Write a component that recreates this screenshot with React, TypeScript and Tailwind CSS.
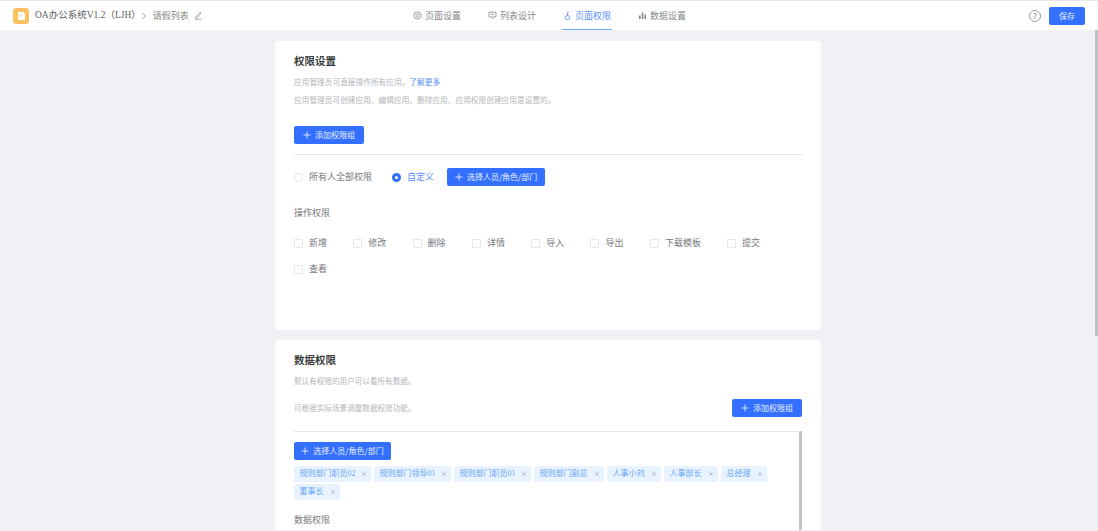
import React from "react";

const Plus = () => (
  <svg width="8" height="8" viewBox="0 0 8 8" className="shrink-0" fill="none" stroke="currentColor" strokeWidth="0.9">
    <path d="M4 .5v7M.5 4h7" />
  </svg>
);

const Btn = ({ label, w }: { label: string; w: string }) => (
  <button className={`flex ${w} h-[18px] items-center justify-center gap-[4px] rounded-[2px] bg-[#3370ff] text-[8px] text-[#e6eeff]`}>
    <Plus />
    <span>{label}</span>
  </button>
);

const Check = ({ label, w }: { label: string; w: string }) => (
  <div className={`flex ${w} items-center gap-[6px]`}>
    <span className="h-[9px] w-[9px] rounded-[1px] border border-[#e4e6ea] bg-white" />
    <span className="text-[9px] leading-[14px] text-[#77797d]">{label}</span>
  </div>
);

const Tag = ({ label, gap = "gap-[7px]" }: { label: string; gap?: string }) => (
  <span className={`flex h-[16px] items-center ${gap} rounded-[2px] bg-[#e9f3ff] px-[5.5px] font-['Liberation_Serif','Noto_Sans_CJK_SC',serif] text-[8px] text-[#66a6f5]`}>
    <span>{label}</span>
    <svg width="4" height="4" viewBox="0 0 4 4" fill="none" stroke="#8a9bb0" strokeWidth="0.6" className="shrink-0">
      <path d="M.4.4l3.2 3.2M3.6.4.4 3.6" />
    </svg>
  </span>
);

const Tab = ({ icon, label, active }: { icon: React.ReactNode; label: string; active?: boolean }) => (
  <div className={`relative flex h-full items-center gap-[3px] px-[1px] text-[9px] ${active ? "text-[#5b8ff9]" : "text-[#85878a]"}`}>
    {icon}
    <span>{label}</span>
    {active && <span className="absolute bottom-0 left-0 right-0 h-[1px] bg-[#6aa9f8]" />}
  </div>
);

export default function App() {
  return (
    <div className="flex h-[531px] w-[1098px] flex-col overflow-hidden bg-[#f0f1f5] font-['Noto_Sans_CJK_SC',sans-serif]">
      <header className="relative flex h-[30px] shrink-0 items-center border-t border-[#e8e8ea] bg-white pl-[13px] pr-[13px]">
        <div className="flex items-center">
          <span className="flex h-[16px] w-[16px] items-center justify-center rounded-[3px] bg-[#fbc061]">
            <svg width="9" height="10" viewBox="0 0 9 10">
              <path d="M1 1h5l2 2v6H1z" fill="#fff" />
              <path d="M2.5 4h3M2.5 6h2" stroke="#fbc061" strokeWidth="0.8" />
            </svg>
          </span>
          <span className="ml-[6px] font-['Liberation_Serif','Noto_Sans_CJK_SC',serif] text-[9.5px] text-[#5c5e62]">OA办公系统V1.2（LJH）</span>
          <svg className="ml-0" width="6" height="8" viewBox="0 0 6 8" fill="none" stroke="#8b8d91" strokeWidth="0.8">
            <path d="M1 .8 4.5 4 1 7.2" />
          </svg>
          <span className="ml-[6px] text-[9px] text-[#85878a]">请假列表</span>
          <svg className="ml-[5px]" width="9" height="9" viewBox="0 0 9 9" fill="none" stroke="#8b8d91" strokeWidth="0.7">
            <path d="M2 6.2 6 1.2l1 .9-4 5-1.3.3zM1.5 8.3h6" />
          </svg>
        </div>
        <nav className="absolute left-[412px] top-0 flex h-full gap-[25px]">
          <Tab label="页面设置" icon={<svg width="9" height="9" viewBox="0 0 9 9" fill="none" stroke="#85878a" strokeWidth="0.8"><circle cx="4.5" cy="4.5" r="3.6" /><circle cx="4.5" cy="4.5" r="1.5" /></svg>} />
          <Tab label="列表设计" icon={<svg width="9" height="9" viewBox="0 0 9 9" fill="none" stroke="#85878a" strokeWidth="0.8"><path d="M1 1.2h7v4.6H5.4L4.5 7.4 3.6 5.8H1zM3 3.4h3" /></svg>} />
          <Tab active label="页面权限" icon={<svg width="9" height="10" viewBox="0 0 9 10" fill="none" stroke="#5b8ff9" strokeWidth="0.8"><circle cx="4.5" cy="6.6" r="2.2" /><path d="M4.5 4.4V1.2h1.2" /></svg>} />
          <Tab label="数据设置" icon={<svg width="9" height="9" viewBox="0 0 9 9" fill="#85878a"><path d="M1 4.5h1.6V8H1zM3.7 1.5h1.6V8H3.7zM6.4 3.5H8V8H6.4z" /></svg>} />
        </nav>
        <div className="ml-auto flex items-center gap-[8px]">
          <span className="flex h-[12px] w-[12px] items-center justify-center rounded-full border border-[#9a9ca0] text-[8px] leading-none text-[#77797d]">?</span>
          <button className="h-[18px] w-[36px] rounded-[2px] bg-[#3370ff] text-[8px] text-[#e6eeff]">保存</button>
        </div>
      </header>

      <div className="flex min-h-0 flex-1">
        <main className="flex flex-1 justify-center pl-[1px]">
          <div className="flex w-[546px] flex-col gap-[10px] pt-[11px]">
            <section className="h-[289px] shrink-0 rounded-[3px] bg-white px-[19px] pt-[12px]">
              <h2 className="text-[10.5px] font-bold leading-[16px] text-[#3b3d40]">权限设置</h2>
              <p className="mt-[7px] text-[7.7px] leading-[12px] text-[#b4b6ba]">
                应用管理员可直接操作所有应用。<span className="text-[#5b8ff9]">了解更多</span>
              </p>
              <p className="mt-[6px] text-[7.7px] leading-[12px] text-[#b4b6ba]">应用管理员可创建应用、编辑应用、删除应用、应用权限创建应用是设置的。</p>
              <div className="mt-[20px]">
                <Btn label="添加权限组" w="w-[70px]" />
              </div>
              <div className="mt-[10px] w-[509px] border-t border-[#e6e7ea]" />
              <div className="mt-[13px] flex items-center">
                <span className="h-[9px] w-[9px] rounded-full border border-[#e4e6ea]" />
                <span className="ml-[6px] text-[9px] text-[#77797d]">所有人全部权限</span>
                <span className="ml-[20px] flex h-[9px] w-[9px] items-center justify-center rounded-full bg-[#3370ff]">
                  <span className="h-[3px] w-[3px] rounded-full bg-white" />
                </span>
                <span className="ml-[6px] text-[9px] text-[#5b8ff9]">自定义</span>
                <div className="ml-[13px]">
                  <Btn label="选择人员/角色/部门" w="w-[98px]" />
                </div>
              </div>
              <h3 className="mt-[20px] text-[9px] leading-[14px] text-[#77797d]">操作权限</h3>
              <div className="mt-[16px] flex flex-wrap gap-y-[12px]">
                <Check label="新增" w="w-[59.3px]" />
                <Check label="修改" w="w-[59.3px]" />
                <Check label="删除" w="w-[59.3px]" />
                <Check label="详情" w="w-[59.3px]" />
                <Check label="导入" w="w-[59.3px]" />
                <Check label="导出" w="w-[59.5px]" />
                <Check label="下载模板" w="w-[77px]" />
                <Check label="提交" w="w-[59px]" />
                <Check label="查看" w="w-[59px]" />
              </div>
            </section>

            <section className="h-[190px] shrink-0 overflow-hidden rounded-t-[3px] bg-white px-[19px] pt-[12px]">
              <h2 className="text-[10.5px] font-bold leading-[16px] text-[#3b3d40]">数据权限</h2>
              <p className="mt-[7px] text-[7.6px] leading-[12px] text-[#b4b6ba]">默认有权限的用户可以看所有数据。</p>
              <div className="mt-[12px] flex items-center justify-between">
                <p className="text-[7.6px] leading-[12px] text-[#b4b6ba]">可根据实际场景调整数据权限功能。</p>
                <Btn label="添加权限组" w="w-[70px]" />
              </div>
              <div className="mt-[14px] h-[120px] w-[508px] border-r-[3px] border-t border-r-[#c4c4c4] border-t-[#e6e7ea] pt-[10px]">
                <Btn label="选择人员/角色/部门" w="w-[97px]" />
                <div className="mt-[6px] flex flex-wrap gap-x-[3px] gap-y-[2px]">
                  <Tag label="规则部门职员02" gap="gap-[6px]" />
                  <Tag label="规则部门领导01" gap="gap-[6px]" />
                  <Tag label="规则部门职员01" gap="gap-[6px]" />
                  <Tag label="规则部门副总" />
                  <Tag label="人事小刘" />
                  <Tag label="人事部长" />
                  <Tag label="总经理" />
                  <Tag label="董事长" />
                </div>
                <h3 className="mt-[13px] text-[9px] leading-[14px] text-[#77797d]">数据权限</h3>
              </div>
            </section>
          </div>
        </main>
        <div className="w-[3px] shrink-0 bg-[#f1f1f1]">
          <div className="h-[306px] bg-[#c1c1c1]" />
        </div>
      </div>
    </div>
  );
}
